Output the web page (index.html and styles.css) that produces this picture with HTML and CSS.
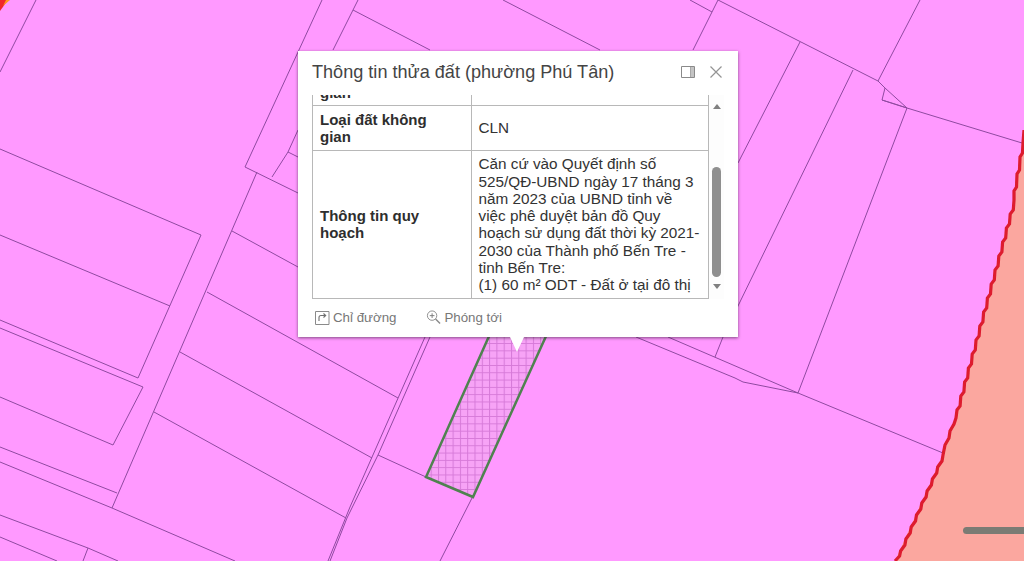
FILE: index.html
```html
<!DOCTYPE html>
<html lang="vi">
<head>
<meta charset="utf-8">
<title>Thông tin thửa đất</title>
<link rel="stylesheet" href="styles.css">
</head>
<body>
<main class="map">
  <svg class="map-canvas" width="1024" height="561" viewBox="0 0 1024 561" xmlns="http://www.w3.org/2000/svg">
    <defs>
      <pattern id="hatch" width="7.300" height="7.300" patternUnits="userSpaceOnUse">
        <rect width="7.300" height="7.300" fill="#f7a3f6"/>
        <path d="M0 .5H7.300M.5 0V7.300" stroke="#bf5fc4" stroke-width="1" stroke-opacity=".6" fill="none"/>
      </pattern>
      <filter id="soft" x="-5%" y="-5%" width="110%" height="110%"><feGaussianBlur stdDeviation=".4"/></filter>
    </defs>
    <rect class="land" width="1024" height="561"/>
    <path class="zone" d="M1024 130L1014 200L956 418L943 455L895 561H1024Z"/>
    <g class="parcels" filter="url(#soft)">
      <path d="M36 0L0 72"/>
      <path d="M0 149L201 235L138 378L0 320"/>
      <path d="M0 235L170 306"/>
      <path d="M0 328L143 387L113 445L0 397"/>
      <path d="M0 447L117 493"/>
      <path d="M0 462L112 508L235 561"/>
      <path d="M257 172L112 508"/>
      <path d="M322 0L245 167L298 193"/>
      <path d="M272 177L288 152L298 130"/>
      <path d="M288 152L298 157"/>
      <path d="M232 231L298 267"/>
      <path d="M207 292L398 398"/>
      <path d="M180 352L372 458"/>
      <path d="M154 412L346 518"/>
      <path d="M425 337L350 507L328 561"/>
      <path d="M430 337L378 455L347 518L330 561"/>
      <path d="M378 455L426 477"/>
      <path d="M472 498L440 561"/>
      <path d="M0 515L88 548L118 561"/>
      <path d="M88 548L83 561"/>
      <path d="M0 537L57 561"/>
      <path d="M358 0L353 10L333 50"/>
      <path d="M353 10L430 50"/>
      <path d="M503 0L600 50"/>
      <path d="M690 0L712 12"/>
      <path d="M718 0L693 50"/>
      <path d="M718 0L878 81L885 88L907 108L882 100L885 88"/>
      <path d="M882 100L907 108L1022 143"/>
      <path d="M920 0L878 81"/>
      <path d="M907 108L798 393"/>
      <path d="M853 70L737 308"/>
      <path d="M800 42L738 163"/>
      <path d="M723 337L715 357"/>
      <path d="M668 337L798 393L943 453"/>
      <path d="M636 337L735 378L743 382L798 393"/>
    </g>
    <g filter="url(#soft)">
      <path class="plot" d="M426 477L473 497L547 334H490Z"/>
      <path class="boundary" d="M1024 130L1023 143L1022.500 153L1020 157L1019.500 170L1017 174L1016.500 187L1014 191L1014 200L1013.300 210L1010.200 214L1009.500 224L1006.400 228L1005.700 238L1002.600 242L1001.900 252L998.800 256L998.100 266L995 270L994.300 280L991.200 284L990.500 294L987.400 298L986.700 308L983.600 312L982.900 322L979.800 326L979.100 336L976 340L975.300 350L972.200 354L971.500 364L968.400 368L967.700 378L964.600 382L963.900 392L960.800 396L960.100 406L957 410L956 418L954 424L950 431L949 438L945 445L944 450L943 455L942 461L937.700 467L936.700 473L932.400 479L931.400 485L927.100 491L926.100 497L921.800 503L920.800 509L916.500 515L915.500 521L911.200 527L910.200 533L905.900 539L904.900 545L900.600 551L899.600 556L895 561"/>
      <path class="corner-red" d="M0 11L8 0H0Z"/>
      <path class="corner-orange" d="M3 6L10 0H6Z"/>
    </g>
  </svg>

  <section class="popup">
    <header class="popup-head">
      <h1 class="popup-title">Thông tin thửa đất (phường Phú Tân)</h1>
      <div class="popup-actions">
        <svg class="icon-dock" width="14" height="12" viewBox="0 0 14 12" xmlns="http://www.w3.org/2000/svg"><path d="M.5.500H13.500V11.500H.5Z" fill="none" stroke="#8a8a8a"/><path d="M10 1H13V11H10Z" fill="#c4c4c4"/><path d="M9.500 1V11" stroke="#a8a8a8" fill="none"/></svg>
        <svg class="icon-close" width="12" height="12" viewBox="0 0 12 12" xmlns="http://www.w3.org/2000/svg"><path d="M.5.500L11.500 11.500M11.500.500L.5 11.500" stroke="#949494" stroke-width="1.200" fill="none"/></svg>
      </div>
    </header>
    <div class="popup-body">
      <div class="table-clip">
        <table class="info-table">
          <tr><th>gian</th><td></td></tr>
          <tr><th>Loại đất không gian</th><td>CLN</td></tr>
          <tr><th>Thông tin quy hoạch</th><td>Căn cứ vào Quyết định số 525/QĐ-UBND ngày 17 tháng 3 năm 2023 của UBND tỉnh về việc phê duyệt bản đồ Quy hoạch sử dụng đất thời kỳ 2021-2030 của Thành phố Bến Tre - tỉnh Bến Tre:<br>(1) 60 m² ODT - Đất ở tại đô thị</td></tr>
        </table>
      </div>
      <div class="scrollbar">
        <span class="arrow-up"></span>
        <span class="thumb"></span>
        <span class="arrow-down"></span>
      </div>
    </div>
    <footer class="popup-foot">
      <a class="action">
        <svg width="15" height="15" viewBox="0 0 15 15" xmlns="http://www.w3.org/2000/svg"><path d="M.5 1.500H14V14.500H.5Z" fill="none" stroke="#8a8a8a"/><path d="M4 11V7.500Q4 5.500 6 5.500H10.500M8.500 3.500L10.700 5.500L8.500 7.500" fill="none" stroke="#6f6f6f" stroke-width="1.100"/></svg>
        Chỉ đường
      </a>
      <a class="action">
        <svg width="15" height="15" viewBox="0 0 16 16" xmlns="http://www.w3.org/2000/svg"><circle cx="6.500" cy="6" r="5" fill="none" stroke="#8a8a8a"/><path d="M10.200 9.700L15 14.500" stroke="#8a8a8a" stroke-width="1.500" fill="none"/><path d="M4 6H9M6.500 3.500V8.500" stroke="#7a7a7a" fill="none"/></svg>
        Phóng tới
      </a>
    </footer>
    <span class="popup-tip"></span>
  </section>

  <span class="scale-bar"></span>
</main>
</body>
</html>
```

FILE: styles.css
```css
html, body {
  margin: 0;
  padding: 0;
  width: 1024px;
  height: 561px;
  overflow: hidden;
}

body {
  font-family: "Liberation Sans", Arial, sans-serif;
  color: #333;
}

.map {
  position: relative;
  width: 1024px;
  height: 561px;
  overflow: hidden;
  background: #ff99ff;
}

.map-canvas {
  position: absolute;
  left: 0;
  top: 0;
  display: block;
}

.land { fill: #ff99ff; }
.zone { fill: #fba79f; }

.parcels path {
  fill: none;
  stroke: #8f4aa0;
  stroke-width: 1;
}

.plot {
  fill: url(#hatch);
  stroke: #4f8250;
  stroke-width: 2.500;
}

.boundary {
  fill: none;
  stroke: #dd1a2e;
  stroke-width: 3.200;
}

.corner-red { fill: #f0262a; }
.corner-orange { fill: #ff9a1f; }

.popup {
  position: absolute;
  left: 298px;
  top: 51px;
  width: 440px;
  height: 286px;
  box-sizing: border-box;
  background: #fff;
  box-shadow: 0 1px 3px rgba(60, 30, 60, .65);
  display: flex;
  flex-direction: column;
  padding: 0 14px;
}

.popup-head {
  display: flex;
  align-items: center;
  justify-content: space-between;
  box-sizing: border-box;
  height: 44px;
  padding-bottom: 2px;
}

.popup-title {
  margin: 0;
  font-size: 18.100px;
  font-weight: 400;
  color: #444;
  line-height: 22px;
}

.popup-actions {
  display: flex;
  align-items: center;
  gap: 15px;
  padding-bottom: 1px;
  margin-right: 2px;
}

.popup-actions svg { display: block; }

.popup-body {
  display: flex;
  height: 204px;
}

.table-clip {
  width: 397px;
  height: 204px;
  overflow: hidden;
}

.info-table {
  width: 397px;
  border-collapse: collapse;
  table-layout: fixed;
  font-size: 15px;
  line-height: 17.250px;
  color: #333;
  margin-top: -17px;
}

.info-table th,
.info-table td {
  border: 1px solid #b8b8b8;
  padding: 4.500px 7px 4.500px 6.500px;
  text-align: left;
  vertical-align: middle;
}

.info-table td {
  font-size: 15.300px;
}

.info-table th {
  width: 139px;
  padding-left: 7px;
  padding-right: 12px;
  font-weight: 700;
  color: #2e2e2e;
}

.scrollbar {
  width: 15px;
  display: flex;
  flex-direction: column;
  align-items: center;
  background: #fdfdfd;
  padding-top: 9px;
  box-sizing: border-box;
}

.arrow-up {
  width: 0;
  height: 0;
  border-left: 4.500px solid transparent;
  border-right: 4.500px solid transparent;
  border-bottom: 5px solid #808080;
}

.thumb {
  width: 9px;
  height: 110px;
  margin-top: 58px;
  border-radius: 5px;
  background: #8f8f8f;
}

.arrow-down {
  width: 0;
  height: 0;
  margin-top: 7px;
  border-left: 4.500px solid transparent;
  border-right: 4.500px solid transparent;
  border-top: 5px solid #808080;
}

.popup-foot {
  display: flex;
  align-items: center;
  gap: 30px;
  box-sizing: border-box;
  height: 38px;
  padding: 0 0 2px 3px;
}

.action {
  display: flex;
  align-items: center;
  gap: 3px;
  font-size: 13.300px;
  color: #777;
}

.action svg { display: block; flex: none; }

.popup-tip {
  position: absolute;
  left: 212px;
  top: 286px;
  width: 0;
  height: 0;
  border-left: 7.500px solid transparent;
  border-right: 7.500px solid transparent;
  border-top: 15px solid #fff;
}

.scale-bar {
  position: absolute;
  left: 963px;
  top: 527px;
  width: 61px;
  height: 7px;
  border-radius: 4px 0 0 4px;
  background: #7b7b74;
}
```
